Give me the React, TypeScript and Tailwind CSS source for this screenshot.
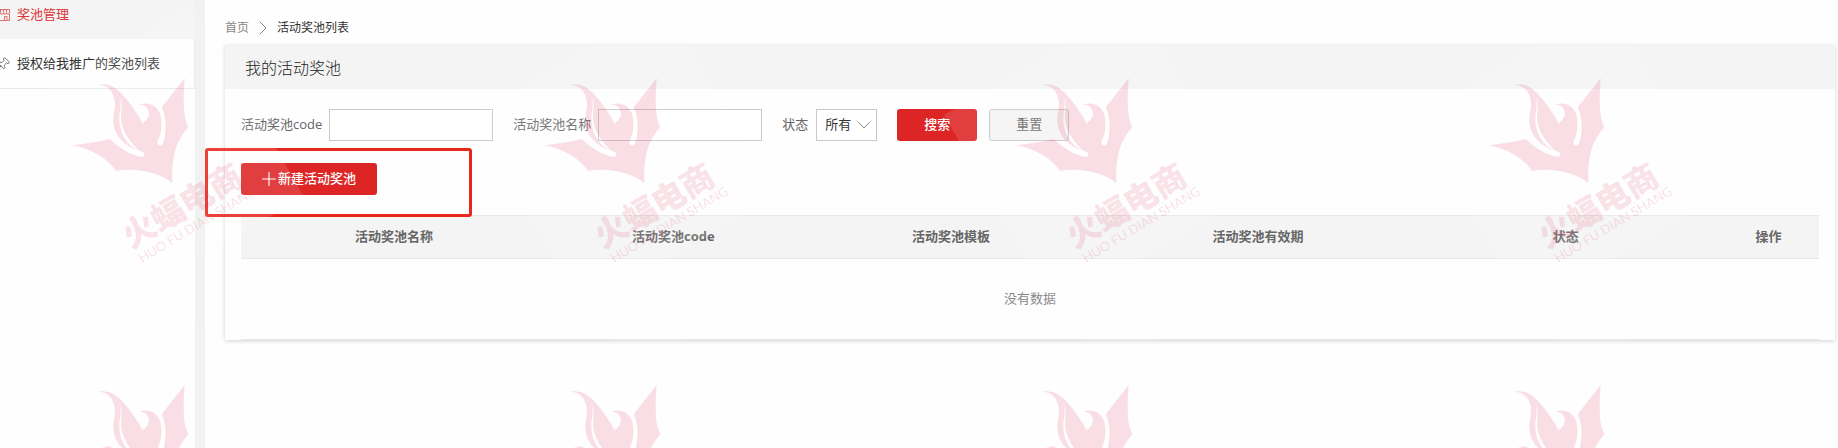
import React from 'react';
import { ChevronRight, ChevronDown, Pin, Plus } from 'lucide-react';

interface Column {
  title: string;
  width: string;
}

const columns: Column[] = [
  { title: '活动奖池名称', width: 'w-[19.4%]' },
  { title: '活动奖池code', width: 'w-[16%]' },
  { title: '活动奖池模板', width: 'w-[19.2%]' },
  { title: '活动奖池有效期', width: 'w-[19.7%]' },
  { title: '状态', width: 'w-[19.3%]' },
  { title: '操作', width: 'w-[6.4%]' },
];

// the second row only shows the top of the logo, so it carries no text
const watermarks = [
  { x: 0, y: 0, text: true },
  { x: 472, y: 0, text: true },
  { x: 944, y: 0, text: true },
  { x: 1416, y: 0, text: true },
  { x: 0, y: 307, text: false },
  { x: 472, y: 307, text: false },
  { x: 944, y: 307, text: false },
  { x: 1416, y: 307, text: false },
];

function ShopIcon() {
  return (
    <svg className="w-[14px] h-[14px]" viewBox="0 0 14 14" fill="none" stroke="currentColor" strokeWidth="1" opacity="0.7">
      <path d="M1.5 1.5h12v3.2a1.5 1.5 0 0 1-3 0 1.5 1.5 0 0 1-3 0 1.5 1.5 0 0 1-3 0 1.500 1.500 0 0 1-3 0zM4.500 1.500v3M7.500 1.500v3M10.500 1.500v3M1.500 6v6.500h12V6M8.500 12.500V8.500h2.500v4" />
    </svg>
  );
}

function Watermark() {
  return (
    <svg className="absolute inset-0 w-full h-full pointer-events-none" aria-hidden="true">
      {watermarks.map(({ x, y, text }) => (
        <g key={`${x}-${y}`} transform={`translate(${x} ${y})`}>
          <path d="M0 115 193 4 304 197 111 308Z" fill="#fff" fillOpacity="0.12" />
          <g fill="#db2450" fillOpacity="0.14">
            <path
              transform="translate(70 72) scale(0.3333)"
              fillRule="evenodd"
              d="M8 220C45 215 85 210 120 201C145 227 180 248 210 254C220 256 226 250 223 245C219 239 211 238 203 235C160 221 129 185 130 145C130 120 137 108 134 85C130 58 115 39 84 38C110 33 131 42 148 58C177 88 200 120 218 154C232 144 238 133 236 120C233 106 223 97 208 98C232 88 260 98 270 125C280 160 272 188 264 205C260 215 265 222 272 222C281 219 287 190 287 160C287 136 281 121 275 106L344 18C341 65 336 130 355 166C322 205 305 240 307 333C270 303 200 285 138 297C110 255 60 230 8 220ZM148 72C163 110 146 125 157 162C165 190 185 215 208 237C172 222 149 185 148 145C147 120 157 105 148 72Z"
            />
            {text && (
              <>
                <g transform="translate(131 249) rotate(-30)">
                  <text className="font-['Noto_Sans_CJK_SC',sans-serif] text-[33px] font-black">火蝠电商</text>
                </g>
                <g transform="translate(142 263) rotate(-31)">
                  <text className="font-['Lato',sans-serif] text-[13px]">HUO FU DIAN SHANG</text>
                </g>
              </>
            )}
          </g>
        </g>
      ))}
    </svg>
  );
}

function Sidebar() {
  return (
    <aside className="w-[205px] shrink-0 border-r-[10px] border-[#f1f1f1]">
      <nav className="overflow-hidden text-[13px]">
        <a href="#pools" className="flex items-center gap-[7px] h-[39px] pb-[10px] -ml-1 bg-[#f4f4f4] text-[#d93636]">
          <ShopIcon />
          奖池管理
        </a>
        <a href="#authorized" className="flex items-center gap-[7px] h-[50px] -ml-1 border-b border-r border-[#e8e8e8] text-[#333]">
          <Pin className="w-[14px] h-[14px] rotate-45 text-[#666]" strokeWidth={1.5} />
          授权给我推广的奖池列表
        </a>
      </nav>
    </aside>
  );
}

function SearchForm() {
  return (
    <form className="flex items-center h-8 text-[13px] text-[#666]" onSubmit={(e) => e.preventDefault()}>
      <label htmlFor="code" className="mr-[7px]">活动奖池code</label>
      <input id="code" type="text" className="w-[164px] h-8 px-2 mr-5 bg-white border border-[#c8c8c8]" />
      <label htmlFor="name" className="mr-[7px]">活动奖池名称</label>
      <input id="name" type="text" className="w-[164px] h-8 px-2 mr-5 bg-white border border-[#c8c8c8]" />
      <label htmlFor="status" className="mr-2">状态</label>
      <div className="relative mr-5">
        <select id="status" className="block appearance-none w-[61px] h-8 pl-2 bg-white border border-[#c8c8c8] text-[#333]">
          <option>所有</option>
        </select>
        <ChevronDown className="absolute right-px top-1 w-6 h-6 text-[#888] pointer-events-none" strokeWidth={1} />
      </div>
      <button type="submit" className="w-20 h-8 mr-3 rounded-[3px] bg-[#dd2525] text-white font-medium">搜索</button>
      <button type="reset" className="w-20 h-8 rounded-[3px] bg-[#f4f4f4] border border-[#c8c8c8]">重置</button>
    </form>
  );
}

function PoolTable() {
  return (
    <table className="w-full mt-5 table-fixed border-collapse text-[13px] text-[#666]">
      <thead>
        <tr className="h-[43px] bg-[#f4f4f4] border-y border-[#e8e8e8]">
          {columns.map((column) => (
            <th key={column.title} className={`${column.width} font-bold text-center`}>
              {column.title}
            </th>
          ))}
        </tr>
      </thead>
      <tbody>
        <tr className="h-[81px] border-b border-[#e8e8e8]">
          <td colSpan={columns.length} className="text-center text-[#888]">没有数据</td>
        </tr>
      </tbody>
    </table>
  );
}

export default function App() {
  return (
    <div className="relative flex min-h-screen overflow-hidden bg-[#fefefe] font-['Open_Sans','Noto_Sans_CJK_SC',sans-serif]">
      <Sidebar />
      <main className="relative flex-1 pl-5 pr-[3px]">
        <div className="flex items-center gap-0.5 h-[45px] pt-[10px] text-xs">
          <a href="#home" className="text-[#888]">首页</a>
          <ChevronRight className="w-6 h-6 text-[#888]" strokeWidth={1} />
          <span className="text-[#333]">活动奖池列表</span>
        </div>
        <section className="bg-[#fefefe] shadow-[0_1px_4px_rgba(0,0,0,0.18)]">
          <h1 className="flex items-center h-11 px-5 pt-0.5 bg-[#f4f4f4] text-base font-light text-[#222]">我的活动奖池</h1>
          <div className="px-4 pt-5">
            <SearchForm />
            <button className="flex items-center justify-center w-[136px] h-8 mt-[22px] rounded-[3px] bg-[#dd2525] text-[13px] text-white font-medium">
              <Plus className="w-[22px] h-[22px] -ml-1 -mr-0.5" strokeWidth={1.25} />
              新建活动奖池
            </button>
            <PoolTable />
          </div>
        </section>
        <div className="absolute left-0 top-[148px] w-[267px] h-[69px] border-[3px] border-[#e8281e] rounded-[3px] pointer-events-none" />
      </main>
      <Watermark />
    </div>
  );
}
